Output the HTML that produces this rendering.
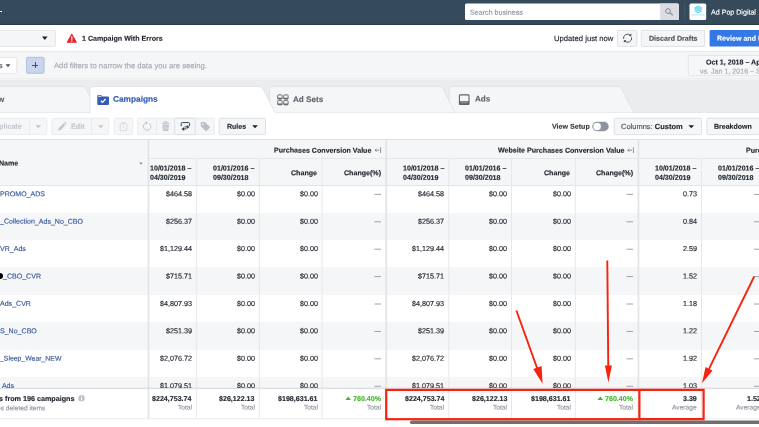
<!DOCTYPE html><html><head><meta charset="utf-8"><title>Ads Manager</title><style>
*{box-sizing:border-box;margin:0;padding:0}
html,body{width:759px;height:427px;overflow:hidden;background:#fff}
body{font-family:"Liberation Sans",Arial,sans-serif;font-size:7.1px;color:#1d2129;position:relative;-webkit-text-stroke:0.14px currentColor}
#wrap{position:absolute;left:0;top:0;width:759px;height:427px;overflow:hidden;will-change:transform}
.abs{position:absolute}
.t{position:absolute;top:0;white-space:nowrap;line-height:1}
.b{font-weight:bold}
</style></head><body><div id="wrap">
<svg class="abs" style="left:0px;top:0px" width="759" height="25" viewBox="0 0 759 25"><rect x="0" y="0" width="759" height="25" fill="#354a5a"/><rect x="0" y="23.9" width="759" height="1.1" fill="#2a3a48"/></svg>
<div class="abs" style="left:0;top:10.5px;width:2px;height:1.2px;background:#fff"></div>
<svg class="abs" style="left:464px;top:2px" width="216" height="19" viewBox="464 2 216 19"><rect x="465" y="3.6" width="214" height="16.4" rx="1.5" fill="#fff" stroke="none" stroke-width="0"/></svg>
<svg class="abs" style="left:660px;top:3px" width="20" height="18" viewBox="660 3 20 18"><path d="M660.2 3.6H677.5Q679 3.6 679 5.1V18.5Q679 20 677.5 20H660.2Z" fill="#dadde1"/><circle cx="668" cy="11.1" r="2.4" fill="none" stroke="#7f8792" stroke-width="0.95"/><path d="M669.9 12.9L672.5 15" stroke="#7f8792" stroke-width="1.1" stroke-linecap="round"/></svg>
<div class="t" style="left:469.6px;transform:translateY(9.73px) rotate(0.1deg);font-size:7.15px;color:#8d949e">Search business</div>
<svg class="abs" style="left:684px;top:3px" width="2" height="18" viewBox="684 3 2 18"><rect x="684.3" y="3.6" width="0.7" height="16.4" fill="#4b5c6c"/></svg>
<svg class="abs" style="left:688px;top:2px" width="20" height="19" viewBox="688 2 20 19"><rect x="689.5" y="3.6" width="16.7" height="16.4" rx="1.6" fill="#fff" stroke="none" stroke-width="0"/></svg>
<svg class="abs" style="left:690px;top:4px" width="16" height="16" viewBox="690 4 16 16"><g fill="none" stroke="#35cdee" stroke-width="0.9" stroke-linejoin="round"><path d="M698.2 6.1L701.8 7.9L698.2 9.7L694.6 7.9Z"/><path d="M694.6 9.3L698.2 11.1L701.8 9.3"/><path d="M694.6 10.9L698.2 12.7L701.8 10.9"/></g><path d="M698.2 6.1L701.8 7.9L698.2 9.7L694.6 7.9Z" fill="#7fe0f4"/><rect x="691.2" y="14.4" width="13.4" height="1.1" fill="#b5ecf8"/></svg>
<div class="t" style="left:710.7px;transform:translateY(9.58px) rotate(0.1deg);font-size:7.1px;color:#fff">Ad Pop Digital</div>
<div class="abs" style="left:0;top:25px;width:759px;height:26.5px;background:#fff"></div>
<svg class="abs" style="left:0px;top:49px" width="759" height="4" viewBox="0 49 759 4"><rect x="0" y="50.9" width="759" height="0.8" fill="#dfe1e4"/></svg>
<svg class="abs" style="left:-6px;top:29px" width="63" height="19" viewBox="-6 29 63 19"><rect x="-5" y="30.3" width="60.4" height="16.1" rx="1.3" fill="#f5f6f7" stroke="#dfe1e5" stroke-width="0.8"/></svg>
<svg class="abs" style="left:42px;top:36px" width="6" height="4" viewBox="42 36 6 4"><path d="M42 36.6H47.60L44.80 40.00Z" fill="#1d2129"/></svg>
<svg class="abs" style="left:66px;top:33px" width="12" height="11" viewBox="66 33 12 11"><path d="M71.8 34.4L76.2 42.2H67.4Z" fill="#e0282e" stroke="#e0282e" stroke-width="1.2" stroke-linejoin="round"/><rect x="71.2" y="36.4" width="1.2" height="3.4" fill="#fff"/><rect x="71.2" y="40.5" width="1.2" height="1.2" fill="#fff"/></svg>
<div class="t b" style="left:81.5px;transform:translateY(35.72px) rotate(0.1deg);font-size:7.1px;color:#1d2129">1 Campaign With Errors</div>
<div class="t" style="left:553.5px;transform:translateY(35.04px) rotate(0.1deg);font-size:7.7px;color:#1d2129">Updated just now</div>
<svg class="abs" style="left:616px;top:29px" width="22" height="19" viewBox="616 29 22 19"><rect x="617.4" y="30.3" width="19.5" height="16.1" rx="1.3" fill="#f5f6f7" stroke="#d8dbdf" stroke-width="0.8"/></svg>
<svg class="abs" style="left:622px;top:32px" width="12" height="12" viewBox="622 32 12 12"><g transform="translate(622.1,32.7)"><g fill="none" stroke="#4b4f56" stroke-width="0.95"><path d="M1.5 6.3A4 4 0 0 1 8.4 2.8"/><path d="M9.5 4.7A4 4 0 0 1 2.6 8.2"/></g><path d="M9.3 0.9L9.2 3.8L6.6 3.1Z" fill="#4b4f56"/><path d="M1.7 10.1L1.8 7.2L4.4 7.9Z" fill="#4b4f56"/></g></svg>
<svg class="abs" style="left:640px;top:29px" width="66" height="19" viewBox="640 29 66 19"><rect x="641.3" y="30.3" width="63.2" height="16.1" rx="1.3" fill="#f5f6f7" stroke="#d8dbdf" stroke-width="0.8"/></svg>
<div class="t b" style="left:648.9px;transform:translateY(35.67px) rotate(0.1deg);font-size:7.1px;color:#4b4f56">Discard Drafts</div>
<svg class="abs" style="left:708px;top:29px" width="63" height="19" viewBox="708 29 63 19"><rect x="709.6" y="30" width="60" height="16.6" rx="1.3" fill="#3578e5" stroke="none" stroke-width="0"/></svg>
<div class="t b" style="left:716.8px;transform:translateY(35.67px) rotate(0.1deg);font-size:7.1px;color:#fff">Review and Publish</div>
<div class="abs" style="left:0;top:51.5px;width:759px;height:27.5px;background:#f5f6f7"></div>
<svg class="abs" style="left:0px;top:77px" width="759" height="4" viewBox="0 77 759 4"><rect x="0" y="78.6" width="759" height="0.9" fill="#e3e5e8"/></svg>
<svg class="abs" style="left:-6px;top:56px" width="24" height="19" viewBox="-6 56 24 19"><rect x="-5" y="57.3" width="21.8" height="16" rx="1.3" fill="#fff" stroke="#dfe1e5" stroke-width="0.8"/></svg>
<div class="t" style="left:-1px;transform:translateY(63.08px) rotate(0.1deg);font-size:7.1px;color:#4b4f56">s</div>
<svg class="abs" style="left:5px;top:64px" width="6" height="4" viewBox="5 64 6 4"><path d="M5.6 64.3H10.40L8.00 67.20Z" fill="#4b4f56"/></svg>
<svg class="abs" style="left:25px;top:56px" width="21" height="19" viewBox="25 56 21 19"><rect x="26.5" y="57.3" width="17.6" height="16" rx="1.3" fill="#c9d5ec" stroke="#a9b9da" stroke-width="0.8"/></svg>
<div class="abs" style="left:32.3px;top:65px;width:6px;height:0.9px;background:#4b4f56"></div><div class="abs" style="left:34.85px;top:62.45px;width:0.9px;height:6px;background:#4b4f56"></div>
<div class="t" style="left:53.8px;transform:translateY(62.24px) rotate(0.1deg);font-size:7.7px;color:#a3a9b3">Add filters to narrow the data you are seeing.</div>
<svg class="abs" style="left:687px;top:54px" width="83" height="23" viewBox="687 54 83 23"><rect x="688.4" y="55.4" width="80" height="20.3" rx="1.3" fill="#f6f7f8" stroke="#dfe1e5" stroke-width="0.8"/></svg>
<div class="t b" style="left:705.6px;transform:translateY(59.57px) rotate(0.1deg);font-size:7.1px;color:#1d2129">Oct 1, 2018 – Apr 30, 2019</div>
<div class="t" style="left:700.2px;transform:translateY(68.48px) rotate(0.1deg);font-size:7.1px;color:#a3a9b3">vs. Jan 1, 2016 – Sep 30, 2018</div>
<div class="abs" style="left:0;top:79.5px;width:759px;height:33.5px;background:#eaeced"></div>
<svg class="abs" style="left:0;top:79px" width="759" height="35" viewBox="0 0 759 35"><path d="M449.2 34.2V10.4Q449.2 7.4 452.2 7.4H617.6Q620.2 7.4 621.4 9.600000000000001L634.2 34.2Z" fill="#f5f6f7" stroke="#dcdee2" stroke-width="0.7"/><path d="M269.5 34.2V10.4Q269.5 7.4 272.5 7.4H439Q441.6 7.4 442.8 9.600000000000001L455.6 34.2Z" fill="#f5f6f7" stroke="#dcdee2" stroke-width="0.7"/><path d="M-8 34.2V10.4Q-8 7.4 -5 7.4H82Q84.6 7.4 85.8 9.600000000000001L98.6 34.2Z" fill="#f5f6f7" stroke="#dcdee2" stroke-width="0.7"/><rect x="0" y="34" width="759" height="1" fill="#fff"/><path d="M0 34H759" stroke="#dcdee2" stroke-width="0.7"/><path d="M90 35V10.5Q90 7.5 93 7.5H259Q261.6 7.5 262.8 9.7L275.6 35Z" fill="#fff" stroke="#dcdee2" stroke-width="0.7"/><rect x="90.4" y="33.7" width="186" height="1.4" fill="#fff"/></svg>
<div class="t b" style="left:-2px;transform:translateY(96.07px) rotate(0.1deg);font-size:8.15px;color:#5f646d">w</div>
<svg class="abs" style="left:96px;top:93px" width="14" height="13" viewBox="96 93 14 13"><g transform="translate(96.55,93.8) scale(1.045,1.02)"><path d="M0.7 2.2Q0.7 1.2 1.7 1.2H4.4L5.6 2.6H10.9Q11.9 2.6 11.9 3.6V9.9Q11.9 10.9 10.9 10.9H1.7Q0.7 10.9 0.7 9.9Z" fill="#365cb5"/><path d="M1.6 1.9H4.1L4.9 2.9H1.6Z" fill="#fff"/><path d="M4.1 6.8L5.7 8.4L8.7 5.1" fill="none" stroke="#fff" stroke-width="1.2"/></g></svg>
<div class="t b" style="left:112.8px;transform:translateY(94.84px) rotate(0.1deg);font-size:8.3px;color:#3159b0">Campaigns</div>
<svg class="abs" style="left:277px;top:94px" width="12" height="12" viewBox="277 94 12 12"><g transform="translate(277,94)"><g fill="none" stroke="#5f646d" stroke-width="0.9"><rect x="0.7" y="0.9" width="4.4" height="4.2" rx="0.6"/><rect x="6.7" y="0.9" width="4.4" height="4.2" rx="0.6"/><rect x="0.7" y="6.6" width="4.4" height="4.2" rx="0.6"/><rect x="6.7" y="6.6" width="4.4" height="4.2" rx="0.6"/></g><g fill="#5f646d"><rect x="0.7" y="3.8" width="4.4" height="1.3"/><rect x="6.7" y="3.8" width="4.4" height="1.3"/><rect x="0.7" y="9.5" width="4.4" height="1.3"/><rect x="6.7" y="9.5" width="4.4" height="1.3"/></g></g></svg>
<div class="t b" style="left:292.8px;transform:translateY(95.97px) rotate(0.1deg);font-size:8.15px;color:#5f646d">Ad Sets</div>
<svg class="abs" style="left:458px;top:94px" width="13" height="12" viewBox="458 94 13 12"><g transform="translate(458.5,94)"><rect x="0.9" y="0.9" width="9.6" height="9.6" rx="0.8" fill="none" stroke="#5f646d" stroke-width="1.1"/><rect x="0.9" y="7.2" width="9.6" height="3.3" fill="#5f646d"/><rect x="2.4" y="8.6" width="6.6" height="0.5" fill="#c9ccd1"/></g></svg>
<div class="t b" style="left:475.3px;transform:translateY(95.57px) rotate(0.1deg);font-size:8.15px;color:#5f646d">Ads</div>
<div class="abs" style="left:0;top:113px;width:759px;height:27px;background:#fff"></div>
<svg class="abs" style="left:-6px;top:117px" width="54" height="19" viewBox="-6 117 54 19"><rect x="-5" y="118.2" width="51.8" height="16.4" rx="1.3" fill="#f5f6f7" stroke="#e6e8eb" stroke-width="0.8"/></svg>
<svg class="abs" style="left:28px;top:118px" width="3" height="17" viewBox="28 118 3 17"><rect x="29.0" y="118.6" width="0.7" height="15.6" fill="#e6e8eb"/></svg>
<div class="t b" style="left:-1.3px;transform:translateY(122.82px) rotate(0.1deg);font-size:7.2px;color:#c3c7cd">plicate</div>
<svg class="abs" style="left:35px;top:125px" width="7" height="4" viewBox="35 125 7 4"><path d="M35.5 125.2H41.10L38.30 128.20Z" fill="#c3c7cd"/></svg>
<svg class="abs" style="left:50px;top:117px" width="60" height="19" viewBox="50 117 60 19"><rect x="51.8" y="118.2" width="56.9" height="16.4" rx="1.3" fill="#f5f6f7" stroke="#e6e8eb" stroke-width="0.8"/></svg>
<svg class="abs" style="left:90px;top:118px" width="3" height="17" viewBox="90 118 3 17"><rect x="91.0" y="118.6" width="0.7" height="15.6" fill="#e6e8eb"/></svg>
<svg class="abs" style="left:0px;top:110px" width="759" height="30" viewBox="0 110 759 30"><path d="M58.2 130.6L58.7 128.2L63.3 123.2L65.4 125.1L60.7 130.1Z M63.9 122.6L64.7 121.7L66.8 123.6L66 124.5Z" fill="#c3c7cd"/></svg>
<div class="t b" style="left:71.3px;transform:translateY(122.82px) rotate(0.1deg);font-size:7.2px;color:#c3c7cd">Edit</div>
<svg class="abs" style="left:97px;top:125px" width="7" height="4" viewBox="97 125 7 4"><path d="M97.9 125.2H103.50L100.70 128.20Z" fill="#c3c7cd"/></svg>
<svg class="abs" style="left:113px;top:117px" width="21" height="19" viewBox="113 117 21 19"><rect x="114.2" y="118.2" width="18.5" height="16.4" rx="1.3" fill="#f5f6f7" stroke="#e6e8eb" stroke-width="0.8"/></svg>
<svg class="abs" style="left:0px;top:110px" width="759" height="30" viewBox="0 110 759 30"><g fill="none" stroke="#d6d9de" stroke-width="0.9"><rect x="120.2" y="123.3" width="6.6" height="7.3" rx="0.6"/></g><path d="M121.8 124.2L123.5 121.6L125.2 124.2Z" fill="#d6d9de"/><rect x="123.1" y="125.3" width="0.8" height="3" fill="#d6d9de"/></svg>
<svg class="abs" style="left:136px;top:117px" width="80" height="19" viewBox="136 117 80 19"><rect x="137.6" y="118.2" width="76.6" height="16.4" rx="1.3" fill="#f5f6f7" stroke="#e6e8eb" stroke-width="0.8"/></svg>
<svg class="abs" style="left:155px;top:118px" width="3" height="17" viewBox="155 118 3 17"><rect x="156.1" y="118.6" width="0.7" height="15.6" fill="#e6e8eb"/></svg>
<svg class="abs" style="left:173px;top:117px" width="24" height="19" viewBox="173 117 24 19"><rect x="174.7" y="118.2" width="20.5" height="16.4" rx="1.3" fill="#f5f6f7" stroke="#d6d9de" stroke-width="0.8"/></svg>
<svg class="abs" style="left:0px;top:110px" width="759" height="30" viewBox="0 110 759 30"><path d="M145.2 123.3A3.7 3.7 0 1 0 149 123.3" fill="none" stroke="#bcc0c6" stroke-width="0.9"/><path d="M145.6 121.2L148 122.7L145.6 124.4Z" fill="#bcc0c6"/></svg>
<svg class="abs" style="left:0px;top:110px" width="759" height="30" viewBox="0 110 759 30"><g fill="#c0c4ca"><rect x="163.8" y="121.4" width="3.8" height="1.4" rx="0.4"/><rect x="161.8" y="122.7" width="7.8" height="1.1" rx="0.3"/><path d="M162.5 124.6H168.9L168.4 130.4Q168.3 131 167.7 131H163.7Q163.1 131 163 130.4Z"/></g><g stroke="#e4e6e9" stroke-width="0.5"><path d="M164.4 125.5V130M165.7 125.5V130M167 125.5V130"/></g></svg>
<svg class="abs" style="left:0px;top:110px" width="759" height="30" viewBox="0 110 759 30"><path d="M181.2 126.2V123.6Q181.2 122.6 182.2 122.6H188.6Q189.6 122.6 189.6 123.6V126" fill="none" stroke="#3a3f48" stroke-width="1.0"/><path d="M184.6 126.9H187.4" stroke="#3a3f48" stroke-width="1"/><path d="M186.9 124.9L189.5 126.9L186.9 128.9Z" fill="#3a3f48"/><path d="M183.6 128.9H186.4" stroke="#3a3f48" stroke-width="1"/><path d="M184.1 126.9L181.5 128.9L184.1 130.9Z" fill="#3a3f48"/></svg>
<svg class="abs" style="left:0px;top:110px" width="759" height="30" viewBox="0 110 759 30"><path d="M200.8 122.6Q200.8 122 201.4 122H205L210 127Q210.4 127.4 210 127.8L206.4 131Q206 131.4 205.6 131L200.8 126.2Z" fill="#bcc0c6"/><circle cx="202.9" cy="124.1" r="0.8" fill="#f5f6f7"/></svg>
<svg class="abs" style="left:218px;top:117px" width="49" height="19" viewBox="218 117 49 19"><rect x="219.2" y="118.2" width="46.3" height="16.4" rx="1.3" fill="#f5f6f7" stroke="#d8dbdf" stroke-width="0.8"/></svg>
<div class="t b" style="left:226.6px;transform:translateY(122.76px) rotate(0.1deg);font-size:7.0px;color:#1d2129">Rules</div>
<svg class="abs" style="left:252px;top:125px" width="6" height="4" viewBox="252 125 6 4"><path d="M252.2 125.2H257.80L255.00 128.30Z" fill="#1d2129"/></svg>
<div class="t b" style="left:552.3px;transform:translateY(123.77px) rotate(0.1deg);font-size:7.1px;color:#353a42">View Setup</div>
<svg class="abs" style="left:591px;top:120px" width="19" height="13" viewBox="591 120 19 13"><rect x="592.4" y="121.8" width="16.3" height="9.4" rx="4.7" fill="#8d949e"/><circle cx="597.1" cy="126.5" r="4.1" fill="#fff" stroke="#8d949e" stroke-width="0.7"/></svg>
<svg class="abs" style="left:613px;top:117px" width="90" height="19" viewBox="613 117 90 19"><rect x="614.2" y="118.2" width="87.3" height="16.4" rx="1.3" fill="#f5f6f7" stroke="#d8dbdf" stroke-width="0.8"/></svg>
<div class="t" style="left:621.2px;transform:translateY(123.00px) rotate(0.1deg);font-size:7.5px;color:#4b4f56">Columns: <b style="color:#1d2129">Custom</b></div>
<svg class="abs" style="left:688px;top:125px" width="7" height="4" viewBox="688 125 7 4"><path d="M688.5 125.2H694.10L691.30 128.30Z" fill="#1d2129"/></svg>
<svg class="abs" style="left:705px;top:117px" width="63" height="19" viewBox="705 117 63 19"><rect x="706.8" y="118.2" width="60" height="16.4" rx="1.3" fill="#f5f6f7" stroke="#d8dbdf" stroke-width="0.8"/></svg>
<div class="t b" style="left:713.8px;transform:translateY(122.76px) rotate(0.1deg);font-size:7.0px;color:#1d2129">Breakdown</div>
<div class="abs" style="left:0;top:139.0px;width:759px;height:46.599999999999994px;background:#f5f6f7"></div>
<div class="abs" style="left:0;top:185.20px;width:759px;height:27.61px;background:#fff"></div>
<div class="abs" style="left:0;top:212.61px;width:759px;height:27.61px;background:#f5f6f7"></div>
<div class="abs" style="left:0;top:240.02px;width:759px;height:27.61px;background:#fff"></div>
<div class="abs" style="left:0;top:267.43px;width:759px;height:27.61px;background:#f5f6f7"></div>
<div class="abs" style="left:0;top:294.84px;width:759px;height:27.61px;background:#fff"></div>
<div class="abs" style="left:0;top:322.25px;width:759px;height:27.61px;background:#f5f6f7"></div>
<div class="abs" style="left:0;top:349.66px;width:759px;height:27.61px;background:#fff"></div>
<div class="abs" style="left:0;top:377.07px;width:759px;height:27.61px;background:#f5f6f7"></div>
<svg class="abs" style="left:0px;top:138px" width="759" height="3" viewBox="0 138 759 3"><rect x="0" y="139.0" width="759" height="0.9" fill="#dfe1e5"/></svg>
<svg class="abs" style="left:148px;top:157px" width="612" height="3" viewBox="148 157 612 3"><rect x="148.5" y="158.1" width="611" height="0.9" fill="#e4e6e9"/></svg>
<svg class="abs" style="left:0px;top:184px" width="759" height="3" viewBox="0 184 759 3"><rect x="0" y="185.1" width="759" height="0.9" fill="#dfe1e5"/></svg>
<svg class="abs" style="left:146px;top:139px" width="5" height="250" viewBox="146 139 5 250"><rect x="147.6" y="139.0" width="1.7" height="249.2" fill="#e2e4e8"/></svg>
<svg class="abs" style="left:194px;top:158px" width="4" height="231" viewBox="194 158 4 231"><rect x="195.8" y="158.1" width="1.0" height="230.1" fill="#e6e8eb"/></svg>
<svg class="abs" style="left:257px;top:158px" width="4" height="231" viewBox="257 158 4 231"><rect x="258.9" y="158.1" width="1.0" height="230.1" fill="#e6e8eb"/></svg>
<svg class="abs" style="left:320px;top:158px" width="4" height="231" viewBox="320 158 4 231"><rect x="321.6" y="158.1" width="1.0" height="230.1" fill="#e6e8eb"/></svg>
<svg class="abs" style="left:384px;top:139px" width="5" height="250" viewBox="384 139 5 250"><rect x="385.40000000000003" y="139.0" width="1.7" height="249.2" fill="#e2e4e8"/></svg>
<svg class="abs" style="left:447px;top:158px" width="4" height="231" viewBox="447 158 4 231"><rect x="448.3" y="158.1" width="1.0" height="230.1" fill="#e6e8eb"/></svg>
<svg class="abs" style="left:510px;top:158px" width="3" height="231" viewBox="510 158 3 231"><rect x="511" y="158.1" width="1.0" height="230.1" fill="#e6e8eb"/></svg>
<svg class="abs" style="left:573px;top:158px" width="4" height="231" viewBox="573 158 4 231"><rect x="574.8" y="158.1" width="1.0" height="230.1" fill="#e6e8eb"/></svg>
<svg class="abs" style="left:636px;top:139px" width="5" height="250" viewBox="636 139 5 250"><rect x="637.6" y="139.0" width="1.7" height="249.2" fill="#e2e4e8"/></svg>
<svg class="abs" style="left:700px;top:158px" width="3" height="231" viewBox="700 158 3 231"><rect x="701" y="158.1" width="1.0" height="230.1" fill="#e6e8eb"/></svg>
<svg class="abs" style="left:763px;top:158px" width="3" height="231" viewBox="763 158 3 231"><rect x="764" y="158.1" width="1.0" height="230.1" fill="#e6e8eb"/></svg>
<div class="t b" style="left:-1.4px;transform:translateY(160.47px) rotate(0.1deg);font-size:7.1px;color:#1d2129">Name</div>
<svg class="abs" style="left:139px;top:162px" width="4" height="3" viewBox="139 162 4 3"><path d="M139.2 162.6H142.70L140.95 165.00Z" fill="#8d949e"/></svg>
<div class="t b" style="right:387.80px;transform:translateY(147.67px) rotate(0.1deg);font-size:7.1px;color:#1d2129">Purchases Conversion Value</div>
<svg class="abs" style="left:374px;top:146px" width="9" height="8" viewBox="374 146 9 8"><g transform="translate(374.59999999999997,146.2)" fill="none" stroke="#7f8792" stroke-width="0.9"><path d="M0.4 4H4.6M2 2.4L0.4 4L2 5.6"/><path d="M6 1.2V6.8"/></g></svg>
<div class="t b" style="right:135.00px;transform:translateY(147.67px) rotate(0.1deg);font-size:7.1px;color:#1d2129">Website Purchases Conversion Value</div>
<svg class="abs" style="left:627px;top:146px" width="9" height="8" viewBox="627 146 9 8"><g transform="translate(627.4,146.2)" fill="none" stroke="#7f8792" stroke-width="0.9"><path d="M0.4 4H4.6M2 2.4L0.4 4L2 5.6"/><path d="M6 1.2V6.8"/></g></svg>
<div class="t b" style="left:746.3px;transform:translateY(147.67px) rotate(0.1deg);font-size:7.1px;color:#1d2129">Purchases ROAS</div>
<div class="t b" style="left:149.8px;transform:translateY(165.57px) rotate(0.1deg);font-size:7.1px;color:#1d2129">10/01/2018 –</div>
<div class="t b" style="left:149.8px;transform:translateY(174.87px) rotate(0.1deg);font-size:7.1px;color:#1d2129">04/30/2019</div>
<div class="t b" style="left:212.5px;transform:translateY(165.57px) rotate(0.1deg);font-size:7.1px;color:#1d2129">01/01/2016 –</div>
<div class="t b" style="left:212.5px;transform:translateY(174.87px) rotate(0.1deg);font-size:7.1px;color:#1d2129">09/30/2018</div>
<div class="t b" style="right:442.00px;transform:translateY(170.17px) rotate(0.1deg);font-size:7.1px;color:#1d2129">Change</div>
<div class="t b" style="right:378.00px;transform:translateY(170.17px) rotate(0.1deg);font-size:7.1px;color:#1d2129">Change(%)</div>
<div class="t b" style="left:402.6px;transform:translateY(165.57px) rotate(0.1deg);font-size:7.1px;color:#1d2129">10/01/2018 –</div>
<div class="t b" style="left:402.6px;transform:translateY(174.87px) rotate(0.1deg);font-size:7.1px;color:#1d2129">04/30/2019</div>
<div class="t b" style="left:465.2px;transform:translateY(165.57px) rotate(0.1deg);font-size:7.1px;color:#1d2129">01/01/2016 –</div>
<div class="t b" style="left:465.2px;transform:translateY(174.87px) rotate(0.1deg);font-size:7.1px;color:#1d2129">09/30/2018</div>
<div class="t b" style="right:189.00px;transform:translateY(170.17px) rotate(0.1deg);font-size:7.1px;color:#1d2129">Change</div>
<div class="t b" style="right:125.50px;transform:translateY(170.17px) rotate(0.1deg);font-size:7.1px;color:#1d2129">Change(%)</div>
<div class="t b" style="left:655.1px;transform:translateY(165.57px) rotate(0.1deg);font-size:7.1px;color:#1d2129">10/01/2018 –</div>
<div class="t b" style="left:655.1px;transform:translateY(174.87px) rotate(0.1deg);font-size:7.1px;color:#1d2129">04/30/2019</div>
<div class="t b" style="left:717.9px;transform:translateY(165.57px) rotate(0.1deg);font-size:7.1px;color:#1d2129">01/01/2016 –</div>
<div class="t b" style="left:717.9px;transform:translateY(174.87px) rotate(0.1deg);font-size:7.1px;color:#1d2129">09/30/2018</div>
<div class="t" style="left:-0.3px;transform:translateY(190.23px) rotate(0.1deg);font-size:7.05px;color:#365899">PROMO_ADS</div>
<div class="t" style="right:567.30px;transform:translateY(190.27px) rotate(0.1deg);font-size:7.2px;color:#1d2129">$464.58</div>
<div class="t" style="right:504.20px;transform:translateY(190.27px) rotate(0.1deg);font-size:7.2px;color:#1d2129">$0.00</div>
<div class="t" style="right:441.10px;transform:translateY(190.27px) rotate(0.1deg);font-size:7.2px;color:#1d2129">$0.00</div>
<svg class="abs" style="left:374px;top:192px" width="7" height="4" viewBox="374 192 7 4"><rect x="374.4" y="193.90" width="6.6" height="0.95" fill="#9a9fa8"/></svg>
<div class="t" style="right:378.00px;transform:translateY(191.23px) rotate(0.1deg);font-size:7.1px;color:transparent">—</div>
<div class="t" style="right:314.80px;transform:translateY(190.27px) rotate(0.1deg);font-size:7.2px;color:#1d2129">$464.58</div>
<div class="t" style="right:251.80px;transform:translateY(190.27px) rotate(0.1deg);font-size:7.2px;color:#1d2129">$0.00</div>
<div class="t" style="right:188.20px;transform:translateY(190.27px) rotate(0.1deg);font-size:7.2px;color:#1d2129">$0.00</div>
<svg class="abs" style="left:626px;top:192px" width="8" height="4" viewBox="626 192 8 4"><rect x="626.5" y="193.90" width="6.6" height="0.95" fill="#9a9fa8"/></svg>
<div class="t" style="right:125.90px;transform:translateY(191.23px) rotate(0.1deg);font-size:7.1px;color:transparent">—</div>
<div class="t" style="right:62.00px;transform:translateY(190.27px) rotate(0.1deg);font-size:7.2px;color:#1d2129">0.73</div>
<svg class="abs" style="left:753px;top:192px" width="8" height="4" viewBox="753 192 8 4"><rect x="753.9" y="193.90" width="6.6" height="0.95" fill="#9a9fa8"/></svg>
<div class="t" style="right:-1.50px;transform:translateY(191.23px) rotate(0.1deg);font-size:7.1px;color:transparent">—</div>
<div class="t" style="left:0px;transform:translateY(217.64px) rotate(0.1deg);font-size:7.05px;color:#365899">_Collection_Ads_No_CBO</div>
<div class="t" style="right:567.30px;transform:translateY(217.68px) rotate(0.1deg);font-size:7.2px;color:#1d2129">$256.37</div>
<div class="t" style="right:504.20px;transform:translateY(217.68px) rotate(0.1deg);font-size:7.2px;color:#1d2129">$0.00</div>
<div class="t" style="right:441.10px;transform:translateY(217.68px) rotate(0.1deg);font-size:7.2px;color:#1d2129">$0.00</div>
<svg class="abs" style="left:374px;top:219px" width="7" height="4" viewBox="374 219 7 4"><rect x="374.4" y="221.31" width="6.6" height="0.95" fill="#9a9fa8"/></svg>
<div class="t" style="right:378.00px;transform:translateY(218.64px) rotate(0.1deg);font-size:7.1px;color:transparent">—</div>
<div class="t" style="right:314.80px;transform:translateY(217.68px) rotate(0.1deg);font-size:7.2px;color:#1d2129">$256.37</div>
<div class="t" style="right:251.80px;transform:translateY(217.68px) rotate(0.1deg);font-size:7.2px;color:#1d2129">$0.00</div>
<div class="t" style="right:188.20px;transform:translateY(217.68px) rotate(0.1deg);font-size:7.2px;color:#1d2129">$0.00</div>
<svg class="abs" style="left:626px;top:219px" width="8" height="4" viewBox="626 219 8 4"><rect x="626.5" y="221.31" width="6.6" height="0.95" fill="#9a9fa8"/></svg>
<div class="t" style="right:125.90px;transform:translateY(218.64px) rotate(0.1deg);font-size:7.1px;color:transparent">—</div>
<div class="t" style="right:62.00px;transform:translateY(217.68px) rotate(0.1deg);font-size:7.2px;color:#1d2129">0.84</div>
<svg class="abs" style="left:753px;top:219px" width="8" height="4" viewBox="753 219 8 4"><rect x="753.9" y="221.31" width="6.6" height="0.95" fill="#9a9fa8"/></svg>
<div class="t" style="right:-1.50px;transform:translateY(218.64px) rotate(0.1deg);font-size:7.1px;color:transparent">—</div>
<div class="t" style="left:-0.3px;transform:translateY(245.05px) rotate(0.1deg);font-size:7.05px;color:#365899">VR_Ads</div>
<div class="t" style="right:567.30px;transform:translateY(245.09px) rotate(0.1deg);font-size:7.2px;color:#1d2129">$1,129.44</div>
<div class="t" style="right:504.20px;transform:translateY(245.09px) rotate(0.1deg);font-size:7.2px;color:#1d2129">$0.00</div>
<div class="t" style="right:441.10px;transform:translateY(245.09px) rotate(0.1deg);font-size:7.2px;color:#1d2129">$0.00</div>
<svg class="abs" style="left:374px;top:247px" width="7" height="4" viewBox="374 247 7 4"><rect x="374.4" y="248.72" width="6.6" height="0.95" fill="#9a9fa8"/></svg>
<div class="t" style="right:378.00px;transform:translateY(246.05px) rotate(0.1deg);font-size:7.1px;color:transparent">—</div>
<div class="t" style="right:314.80px;transform:translateY(245.09px) rotate(0.1deg);font-size:7.2px;color:#1d2129">$1,129.44</div>
<div class="t" style="right:251.80px;transform:translateY(245.09px) rotate(0.1deg);font-size:7.2px;color:#1d2129">$0.00</div>
<div class="t" style="right:188.20px;transform:translateY(245.09px) rotate(0.1deg);font-size:7.2px;color:#1d2129">$0.00</div>
<svg class="abs" style="left:626px;top:247px" width="8" height="4" viewBox="626 247 8 4"><rect x="626.5" y="248.72" width="6.6" height="0.95" fill="#9a9fa8"/></svg>
<div class="t" style="right:125.90px;transform:translateY(246.05px) rotate(0.1deg);font-size:7.1px;color:transparent">—</div>
<div class="t" style="right:62.00px;transform:translateY(245.09px) rotate(0.1deg);font-size:7.2px;color:#1d2129">2.59</div>
<svg class="abs" style="left:753px;top:247px" width="8" height="4" viewBox="753 247 8 4"><rect x="753.9" y="248.72" width="6.6" height="0.95" fill="#9a9fa8"/></svg>
<div class="t" style="right:-1.50px;transform:translateY(246.05px) rotate(0.1deg);font-size:7.1px;color:transparent">—</div>
<svg class="abs" style="left:0px;top:271px" width="4" height="9" viewBox="0 271 4 9"><ellipse cx="-0.1" cy="275.98" rx="3.1" ry="3" fill="#000"/></svg>
<div class="t" style="left:2.9px;transform:translateY(272.46px) rotate(0.1deg);font-size:7.05px;color:#365899">_CBO_CVR</div>
<div class="t" style="right:567.30px;transform:translateY(272.50px) rotate(0.1deg);font-size:7.2px;color:#1d2129">$715.71</div>
<div class="t" style="right:504.20px;transform:translateY(272.50px) rotate(0.1deg);font-size:7.2px;color:#1d2129">$0.00</div>
<div class="t" style="right:441.10px;transform:translateY(272.50px) rotate(0.1deg);font-size:7.2px;color:#1d2129">$0.00</div>
<svg class="abs" style="left:374px;top:274px" width="7" height="4" viewBox="374 274 7 4"><rect x="374.4" y="276.13" width="6.6" height="0.95" fill="#9a9fa8"/></svg>
<div class="t" style="right:378.00px;transform:translateY(273.46px) rotate(0.1deg);font-size:7.1px;color:transparent">—</div>
<div class="t" style="right:314.80px;transform:translateY(272.50px) rotate(0.1deg);font-size:7.2px;color:#1d2129">$715.71</div>
<div class="t" style="right:251.80px;transform:translateY(272.50px) rotate(0.1deg);font-size:7.2px;color:#1d2129">$0.00</div>
<div class="t" style="right:188.20px;transform:translateY(272.50px) rotate(0.1deg);font-size:7.2px;color:#1d2129">$0.00</div>
<svg class="abs" style="left:626px;top:274px" width="8" height="4" viewBox="626 274 8 4"><rect x="626.5" y="276.13" width="6.6" height="0.95" fill="#9a9fa8"/></svg>
<div class="t" style="right:125.90px;transform:translateY(273.46px) rotate(0.1deg);font-size:7.1px;color:transparent">—</div>
<div class="t" style="right:62.00px;transform:translateY(272.50px) rotate(0.1deg);font-size:7.2px;color:#1d2129">1.52</div>
<svg class="abs" style="left:753px;top:274px" width="8" height="4" viewBox="753 274 8 4"><rect x="753.9" y="276.13" width="6.6" height="0.95" fill="#9a9fa8"/></svg>
<div class="t" style="right:-1.50px;transform:translateY(273.46px) rotate(0.1deg);font-size:7.1px;color:transparent">—</div>
<div class="t" style="left:-0.5px;transform:translateY(299.87px) rotate(0.1deg);font-size:7.05px;color:#365899">Ads_CVR</div>
<div class="t" style="right:567.30px;transform:translateY(299.91px) rotate(0.1deg);font-size:7.2px;color:#1d2129">$4,807.93</div>
<div class="t" style="right:504.20px;transform:translateY(299.91px) rotate(0.1deg);font-size:7.2px;color:#1d2129">$0.00</div>
<div class="t" style="right:441.10px;transform:translateY(299.91px) rotate(0.1deg);font-size:7.2px;color:#1d2129">$0.00</div>
<svg class="abs" style="left:374px;top:301px" width="7" height="4" viewBox="374 301 7 4"><rect x="374.4" y="303.54" width="6.6" height="0.95" fill="#9a9fa8"/></svg>
<div class="t" style="right:378.00px;transform:translateY(300.87px) rotate(0.1deg);font-size:7.1px;color:transparent">—</div>
<div class="t" style="right:314.80px;transform:translateY(299.91px) rotate(0.1deg);font-size:7.2px;color:#1d2129">$4,807.93</div>
<div class="t" style="right:251.80px;transform:translateY(299.91px) rotate(0.1deg);font-size:7.2px;color:#1d2129">$0.00</div>
<div class="t" style="right:188.20px;transform:translateY(299.91px) rotate(0.1deg);font-size:7.2px;color:#1d2129">$0.00</div>
<svg class="abs" style="left:626px;top:301px" width="8" height="4" viewBox="626 301 8 4"><rect x="626.5" y="303.54" width="6.6" height="0.95" fill="#9a9fa8"/></svg>
<div class="t" style="right:125.90px;transform:translateY(300.87px) rotate(0.1deg);font-size:7.1px;color:transparent">—</div>
<div class="t" style="right:62.00px;transform:translateY(299.91px) rotate(0.1deg);font-size:7.2px;color:#1d2129">1.18</div>
<svg class="abs" style="left:753px;top:301px" width="8" height="4" viewBox="753 301 8 4"><rect x="753.9" y="303.54" width="6.6" height="0.95" fill="#9a9fa8"/></svg>
<div class="t" style="right:-1.50px;transform:translateY(300.87px) rotate(0.1deg);font-size:7.1px;color:transparent">—</div>
<div class="t" style="left:-0.3px;transform:translateY(327.28px) rotate(0.1deg);font-size:7.05px;color:#365899">S_No_CBO</div>
<div class="t" style="right:567.30px;transform:translateY(327.32px) rotate(0.1deg);font-size:7.2px;color:#1d2129">$251.39</div>
<div class="t" style="right:504.20px;transform:translateY(327.32px) rotate(0.1deg);font-size:7.2px;color:#1d2129">$0.00</div>
<div class="t" style="right:441.10px;transform:translateY(327.32px) rotate(0.1deg);font-size:7.2px;color:#1d2129">$0.00</div>
<svg class="abs" style="left:374px;top:329px" width="7" height="4" viewBox="374 329 7 4"><rect x="374.4" y="330.95" width="6.6" height="0.95" fill="#9a9fa8"/></svg>
<div class="t" style="right:378.00px;transform:translateY(328.28px) rotate(0.1deg);font-size:7.1px;color:transparent">—</div>
<div class="t" style="right:314.80px;transform:translateY(327.32px) rotate(0.1deg);font-size:7.2px;color:#1d2129">$251.39</div>
<div class="t" style="right:251.80px;transform:translateY(327.32px) rotate(0.1deg);font-size:7.2px;color:#1d2129">$0.00</div>
<div class="t" style="right:188.20px;transform:translateY(327.32px) rotate(0.1deg);font-size:7.2px;color:#1d2129">$0.00</div>
<svg class="abs" style="left:626px;top:329px" width="8" height="4" viewBox="626 329 8 4"><rect x="626.5" y="330.95" width="6.6" height="0.95" fill="#9a9fa8"/></svg>
<div class="t" style="right:125.90px;transform:translateY(328.28px) rotate(0.1deg);font-size:7.1px;color:transparent">—</div>
<div class="t" style="right:62.00px;transform:translateY(327.32px) rotate(0.1deg);font-size:7.2px;color:#1d2129">1.22</div>
<svg class="abs" style="left:753px;top:329px" width="8" height="4" viewBox="753 329 8 4"><rect x="753.9" y="330.95" width="6.6" height="0.95" fill="#9a9fa8"/></svg>
<div class="t" style="right:-1.50px;transform:translateY(328.28px) rotate(0.1deg);font-size:7.1px;color:transparent">—</div>
<div class="t" style="left:0px;transform:translateY(355.63px) rotate(0.1deg);font-size:6.88px;color:#365899">_Sleep_Wear_NEW</div>
<div class="t" style="right:567.30px;transform:translateY(354.73px) rotate(0.1deg);font-size:7.2px;color:#1d2129">$2,076.72</div>
<div class="t" style="right:504.20px;transform:translateY(354.73px) rotate(0.1deg);font-size:7.2px;color:#1d2129">$0.00</div>
<div class="t" style="right:441.10px;transform:translateY(354.73px) rotate(0.1deg);font-size:7.2px;color:#1d2129">$0.00</div>
<svg class="abs" style="left:374px;top:356px" width="7" height="4" viewBox="374 356 7 4"><rect x="374.4" y="358.36" width="6.6" height="0.95" fill="#9a9fa8"/></svg>
<div class="t" style="right:378.00px;transform:translateY(355.69px) rotate(0.1deg);font-size:7.1px;color:transparent">—</div>
<div class="t" style="right:314.80px;transform:translateY(354.73px) rotate(0.1deg);font-size:7.2px;color:#1d2129">$2,076.72</div>
<div class="t" style="right:251.80px;transform:translateY(354.73px) rotate(0.1deg);font-size:7.2px;color:#1d2129">$0.00</div>
<div class="t" style="right:188.20px;transform:translateY(354.73px) rotate(0.1deg);font-size:7.2px;color:#1d2129">$0.00</div>
<svg class="abs" style="left:626px;top:356px" width="8" height="4" viewBox="626 356 8 4"><rect x="626.5" y="358.36" width="6.6" height="0.95" fill="#9a9fa8"/></svg>
<div class="t" style="right:125.90px;transform:translateY(355.69px) rotate(0.1deg);font-size:7.1px;color:transparent">—</div>
<div class="t" style="right:62.00px;transform:translateY(354.73px) rotate(0.1deg);font-size:7.2px;color:#1d2129">1.92</div>
<svg class="abs" style="left:753px;top:356px" width="8" height="4" viewBox="753 356 8 4"><rect x="753.9" y="358.36" width="6.6" height="0.95" fill="#9a9fa8"/></svg>
<div class="t" style="right:-1.50px;transform:translateY(355.69px) rotate(0.1deg);font-size:7.1px;color:transparent">—</div>
<div class="t" style="left:-1.9px;transform:translateY(382.10px) rotate(0.1deg);font-size:7.05px;color:#365899">_Ads</div>
<div class="t" style="right:567.30px;transform:translateY(382.14px) rotate(0.1deg);font-size:7.2px;color:#1d2129">$1,079.51</div>
<div class="t" style="right:504.20px;transform:translateY(382.14px) rotate(0.1deg);font-size:7.2px;color:#1d2129">$0.00</div>
<div class="t" style="right:441.10px;transform:translateY(382.14px) rotate(0.1deg);font-size:7.2px;color:#1d2129">$0.00</div>
<svg class="abs" style="left:374px;top:384px" width="7" height="4" viewBox="374 384 7 4"><rect x="374.4" y="385.77" width="6.6" height="0.95" fill="#9a9fa8"/></svg>
<div class="t" style="right:378.00px;transform:translateY(383.10px) rotate(0.1deg);font-size:7.1px;color:transparent">—</div>
<div class="t" style="right:314.80px;transform:translateY(382.14px) rotate(0.1deg);font-size:7.2px;color:#1d2129">$1,079.51</div>
<div class="t" style="right:251.80px;transform:translateY(382.14px) rotate(0.1deg);font-size:7.2px;color:#1d2129">$0.00</div>
<div class="t" style="right:188.20px;transform:translateY(382.14px) rotate(0.1deg);font-size:7.2px;color:#1d2129">$0.00</div>
<svg class="abs" style="left:626px;top:384px" width="8" height="4" viewBox="626 384 8 4"><rect x="626.5" y="385.77" width="6.6" height="0.95" fill="#9a9fa8"/></svg>
<div class="t" style="right:125.90px;transform:translateY(383.10px) rotate(0.1deg);font-size:7.1px;color:transparent">—</div>
<div class="t" style="right:62.00px;transform:translateY(382.14px) rotate(0.1deg);font-size:7.2px;color:#1d2129">1.03</div>
<svg class="abs" style="left:753px;top:384px" width="8" height="4" viewBox="753 384 8 4"><rect x="753.9" y="385.77" width="6.6" height="0.95" fill="#9a9fa8"/></svg>
<div class="t" style="right:-1.50px;transform:translateY(383.10px) rotate(0.1deg);font-size:7.1px;color:transparent">—</div>
<div class="abs" style="left:0;top:386.59999999999997px;width:759px;height:1.6px;background:linear-gradient(rgba(0,0,0,0),rgba(0,0,0,0.07))"></div>
<div class="abs" style="left:0;top:388.2px;width:759px;height:38.80000000000001px;background:#fff"></div>
<svg class="abs" style="left:0px;top:387px" width="759" height="4" viewBox="0 387 759 4"><rect x="0" y="388.2" width="759" height="0.9" fill="#d5d8dc"/></svg>
<svg class="abs" style="left:0px;top:417px" width="759" height="4" viewBox="0 417 759 4"><rect x="0" y="418.4" width="759" height="0.8" fill="#e6e8eb"/></svg>
<svg class="abs" style="left:146px;top:388px" width="5" height="31" viewBox="146 388 5 31"><rect x="147.6" y="388.2" width="1.7" height="30.19999999999999" fill="#e2e4e8"/></svg>
<svg class="abs" style="left:194px;top:388px" width="4" height="31" viewBox="194 388 4 31"><rect x="195.8" y="388.2" width="1.0" height="30.19999999999999" fill="#e6e8eb"/></svg>
<svg class="abs" style="left:257px;top:388px" width="4" height="31" viewBox="257 388 4 31"><rect x="258.9" y="388.2" width="1.0" height="30.19999999999999" fill="#e6e8eb"/></svg>
<svg class="abs" style="left:320px;top:388px" width="4" height="31" viewBox="320 388 4 31"><rect x="321.6" y="388.2" width="1.0" height="30.19999999999999" fill="#e6e8eb"/></svg>
<svg class="abs" style="left:384px;top:388px" width="5" height="31" viewBox="384 388 5 31"><rect x="385.40000000000003" y="388.2" width="1.7" height="30.19999999999999" fill="#e2e4e8"/></svg>
<svg class="abs" style="left:447px;top:388px" width="4" height="31" viewBox="447 388 4 31"><rect x="448.3" y="388.2" width="1.0" height="30.19999999999999" fill="#e6e8eb"/></svg>
<svg class="abs" style="left:510px;top:388px" width="3" height="31" viewBox="510 388 3 31"><rect x="511" y="388.2" width="1.0" height="30.19999999999999" fill="#e6e8eb"/></svg>
<svg class="abs" style="left:573px;top:388px" width="4" height="31" viewBox="573 388 4 31"><rect x="574.8" y="388.2" width="1.0" height="30.19999999999999" fill="#e6e8eb"/></svg>
<svg class="abs" style="left:636px;top:388px" width="5" height="31" viewBox="636 388 5 31"><rect x="637.6" y="388.2" width="1.7" height="30.19999999999999" fill="#e2e4e8"/></svg>
<svg class="abs" style="left:700px;top:388px" width="3" height="31" viewBox="700 388 3 31"><rect x="701" y="388.2" width="1.0" height="30.19999999999999" fill="#e6e8eb"/></svg>
<svg class="abs" style="left:763px;top:388px" width="3" height="31" viewBox="763 388 3 31"><rect x="764" y="388.2" width="1.0" height="30.19999999999999" fill="#e6e8eb"/></svg>
<div class="t b" style="left:-1.3px;transform:translateY(395.02px) rotate(0.1deg);font-size:7.2px;color:#1d2129">s from 196 campaigns</div>
<svg class="abs" style="left:77px;top:394px" width="9" height="9" viewBox="77 394 9 9"><circle cx="81.5" cy="398.3" r="3.2" fill="#bec3c9"/><rect x="81.05" y="397.7" width="0.9" height="2.6" fill="#fff"/><rect x="81.05" y="396.2" width="0.9" height="0.9" fill="#fff"/></svg>
<div class="t" style="left:-2.6px;transform:translateY(405.19px) rotate(0.1deg);font-size:6.65px;color:#90949c">es deleted items</div>
<div class="t b" style="right:567.30px;transform:translateY(395.97px) rotate(0.1deg);font-size:7.1px;color:#1d2129">$224,753.74</div>
<div class="t" style="right:567.30px;transform:translateY(404.59px) rotate(0.1deg);font-size:6.65px;color:#90949c">Total</div>
<div class="t b" style="right:504.20px;transform:translateY(395.97px) rotate(0.1deg);font-size:7.1px;color:#1d2129">$26,122.13</div>
<div class="t" style="right:504.20px;transform:translateY(404.59px) rotate(0.1deg);font-size:6.65px;color:#90949c">Total</div>
<div class="t b" style="right:441.10px;transform:translateY(395.97px) rotate(0.1deg);font-size:7.1px;color:#1d2129">$198,631.61</div>
<div class="t" style="right:441.10px;transform:translateY(404.59px) rotate(0.1deg);font-size:6.65px;color:#90949c">Total</div>
<div class="t b" style="right:378.00px;transform:translateY(395.97px) rotate(0.1deg);font-size:7.1px;color:#42b72a">760.40%</div>
<svg class="abs" style="left:345px;top:396px" width="6" height="5" viewBox="345 396 6 5"><path d="M345.4 400.0L348.2 396.6L351 400.0Z" fill="#42b72a"/></svg>
<div class="t" style="right:378.00px;transform:translateY(404.59px) rotate(0.1deg);font-size:6.65px;color:#90949c">Total</div>
<div class="t b" style="right:314.80px;transform:translateY(395.97px) rotate(0.1deg);font-size:7.1px;color:#1d2129">$224,753.74</div>
<div class="t" style="right:314.80px;transform:translateY(404.59px) rotate(0.1deg);font-size:6.65px;color:#90949c">Total</div>
<div class="t b" style="right:251.80px;transform:translateY(395.97px) rotate(0.1deg);font-size:7.1px;color:#1d2129">$26,122.13</div>
<div class="t" style="right:251.80px;transform:translateY(404.59px) rotate(0.1deg);font-size:6.65px;color:#90949c">Total</div>
<div class="t b" style="right:188.20px;transform:translateY(395.97px) rotate(0.1deg);font-size:7.1px;color:#1d2129">$198,631.61</div>
<div class="t" style="right:188.20px;transform:translateY(404.59px) rotate(0.1deg);font-size:6.65px;color:#90949c">Total</div>
<div class="t b" style="right:125.90px;transform:translateY(395.97px) rotate(0.1deg);font-size:7.1px;color:#42b72a">760.40%</div>
<svg class="abs" style="left:597px;top:396px" width="7" height="5" viewBox="597 396 7 5"><path d="M597.5 400.0L600.3000000000001 396.6L603.1 400.0Z" fill="#42b72a"/></svg>
<div class="t" style="right:125.90px;transform:translateY(404.59px) rotate(0.1deg);font-size:6.65px;color:#90949c">Total</div>
<div class="t b" style="right:62.40px;transform:translateY(395.97px) rotate(0.1deg);font-size:7.1px;color:#1d2129">3.39</div>
<div class="t" style="right:62.40px;transform:translateY(404.59px) rotate(0.1deg);font-size:6.65px;color:#90949c">Average</div>
<div class="t b" style="right:-1.50px;transform:translateY(395.97px) rotate(0.1deg);font-size:7.1px;color:#1d2129">1.52</div>
<div class="t" style="right:-1.50px;transform:translateY(404.59px) rotate(0.1deg);font-size:6.65px;color:#90949c">Average</div>
<svg class="abs" style="left:405px;top:419px" width="354" height="8" viewBox="405 419 354 8"><rect x="410" y="420.4" width="360" height="3.7" rx="1.85" fill="#6f6f6f"/></svg>
<svg class="abs" style="left:0;top:0" width="759" height="427" viewBox="0 0 759 427">
<g fill="none" stroke="#f8230f" stroke-width="2.2">
<rect x="386.2" y="389.9" width="253.2" height="29.3"/>
<path d="M639.4 389.9H703.6V419.2H639.4"/>
</g>
<g stroke="#f8230f" stroke-width="1.9" fill="#f8230f">
<path d="M516.4 310.5L538.5 372"/><path d="M542.6 383.8L533.3 369L541.6 366Z" stroke="none"/>
<path d="M607.3 260.6L608.3 370"/><path d="M608.4 382.6L604.9 365.6H611.9Z" stroke="none"/>
<path d="M754.2 276.5L709 368.8"/><path d="M702 383.3L705.5 367.1L712.5 370.5Z" stroke="none"/>
</g></svg>
</div></body></html>
